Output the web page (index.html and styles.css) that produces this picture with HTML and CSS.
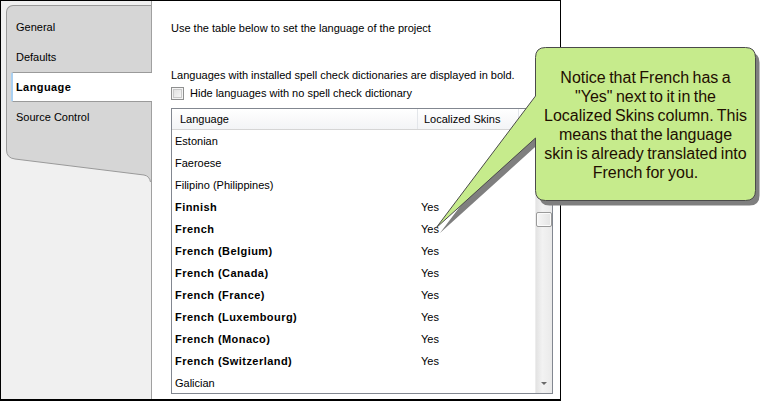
FILE: index.html
```html
<!DOCTYPE html>
<html>
<head>
<meta charset="utf-8">
<link rel="stylesheet" href="styles.css">
</head>
<body>
<div class="window">
  <aside class="sidebar">
    <div class="tabs">
      <div class="tab">General</div>
      <div class="tab">Defaults</div>
      <div class="tab active">Language</div>
      <div class="tab">Source Control</div>
      <svg class="tabs-end" width="145" height="50" viewBox="0 0 145 50">
        <path d="M0,0 H145 V50 H144.5 Q143.5,44 138,43 L9,27 Q0.5,26 0.5,18 Z" fill="#d6d6d6"/>
        <path d="M0.5,0 V18 Q0.5,26 9,27 L138,43 Q143.5,44 144.5,50" fill="none" stroke="#9a9a9a" stroke-width="1"/>
      </svg>
    </div>
  </aside>
  <main class="content">
    <p class="intro">Use the table below to set the language of the project</p>
    <p class="note">Languages with installed spell check dictionaries are displayed in bold.</p>
    <label class="check"><span class="box"></span>Hide languages with no spell check dictionary</label>
    <div class="table">
      <div class="grid">
        <div class="head">
          <div class="hcell c1">Language</div>
          <div class="hcell c2">Localized Skins</div>
          <div class="hcell c3"></div>
        </div>
        <div class="rows">
          <div class="row"><span class="cell">Estonian</span><span class="cell"></span></div>
          <div class="row"><span class="cell">Faeroese</span><span class="cell"></span></div>
          <div class="row"><span class="cell">Filipino (Philippines)</span><span class="cell"></span></div>
          <div class="row bold"><span class="cell">Finnish</span><span class="cell">Yes</span></div>
          <div class="row bold"><span class="cell">French</span><span class="cell">Yes</span></div>
          <div class="row bold"><span class="cell">French (Belgium)</span><span class="cell">Yes</span></div>
          <div class="row bold"><span class="cell">French (Canada)</span><span class="cell">Yes</span></div>
          <div class="row bold"><span class="cell">French (France)</span><span class="cell">Yes</span></div>
          <div class="row bold"><span class="cell">French (Luxembourg)</span><span class="cell">Yes</span></div>
          <div class="row bold"><span class="cell">French (Monaco)</span><span class="cell">Yes</span></div>
          <div class="row bold"><span class="cell">French (Switzerland)</span><span class="cell">Yes</span></div>
          <div class="row"><span class="cell">Galician</span><span class="cell"></span></div>
        </div>
      </div>
      <div class="scrollbar">
        <div class="sb-btn up"></div>
        <div class="sb-track"><div class="thumb"></div></div>
        <div class="sb-btn down"></div>
      </div>
    </div>
  </main>
</div>
<div class="callout">
  <svg class="callout-shape" width="340" height="200" viewBox="0 0 340 200">
    <path transform="translate(4,5)" d="M115.5,7.5 H315.5 Q325.5,7.5 325.5,17.5 V150.5 Q325.5,160.5 315.5,160.5 H115.5 Q105.5,160.5 105.5,150.5 V98 L6,188 L105.5,56 V17.5 Q105.5,7.5 115.5,7.5 Z" fill="#7f7f7f"/>
    <path d="M115.5,7.5 H315.5 Q325.5,7.5 325.5,17.5 V150.5 Q325.5,160.5 315.5,160.5 H115.5 Q105.5,160.5 105.5,150.5 V98 L6,188 L105.5,56 V17.5 Q105.5,7.5 115.5,7.5 Z" fill="#c6eb8c" stroke="#4a4a4a" stroke-width="1"/>
  </svg>
  <div class="callout-text">Notice that French has a<br>"Yes" next to it in the<br>Localized Skins column. This<br>means that the language<br>skin is already translated into<br>French for you.</div>
</div>
</body>
</html>
```

FILE: styles.css
```css
* { box-sizing: border-box; }
html, body { margin: 0; padding: 0; }
body {
  position: relative;
  width: 770px;
  height: 402px;
  background: #fff;
  font-family: "Liberation Sans", Arial, sans-serif;
  font-size: 11px;
  color: #000;
  overflow: hidden;
}
.window {
  display: flex;
  width: 561px;
  height: 401px;
  border: 1px solid #000;
  border-bottom-width: 2px;
  background: #fff;
}
.sidebar {
  width: 151px;
  flex: none;
  background: #f0f0f0;
  border-right: 1px solid #a0a0a0;
  padding: 4px 0 0 5px;
}
.tabs {
  position: relative;
  background: #d6d6d6;
  border-top: 1px solid #9a9a9a;
  border-left: 1px solid #9a9a9a;
  border-top-left-radius: 7px;
  padding-top: 6px;
}
.tab {
  height: 30px;
  display: flex;
  align-items: center;
  padding-left: 9px;
  white-space: nowrap;
}
.tab.active {
  position: relative;
  z-index: 1;
  background: #fff;
  font-weight: bold;
  letter-spacing: 0.4px;
  margin-left: 4px;
  margin-right: -1px;
  padding-left: 3px;
  border-top: 1px solid #9a9a9a;
  border-bottom: 1px solid #9a9a9a;
  border-left: 2px solid #a9d0f2;
  border-radius: 2px 0 0 2px;
}
.tabs-end {
  display: block;
  margin-left: -1px;
  background: #f0f0f0;
}
.content {
  flex: 1;
  background: #fff;
  padding-left: 19px;
}
.intro {
  margin: 20px 0 0;
  line-height: 14px;
}
.note {
  margin: 33px 0 0;
  line-height: 14px;
}
.check {
  display: flex;
  align-items: center;
  gap: 6px;
  height: 13px;
  margin-top: 5px;
  line-height: 13px;
}
.box {
  width: 13px;
  height: 13px;
  border: 1px solid #8e8f8f;
  background: linear-gradient(135deg, #dcdcdc, #fbfbfb);
  box-shadow: inset 0 0 0 1px #f4f4f4, inset 0 0 0 2px #c9c9c9;
}
.table {
  display: flex;
  width: 382px;
  height: 286px;
  margin-top: 8px;
  border: 1px solid #828790;
  background: #fff;
}
.grid {
  flex: 1;
  overflow: hidden;
}
.head {
  display: flex;
  height: 21px;
  border-bottom: 1px solid #d5d5d5;
  background: linear-gradient(#ffffff, #f3f4f6);
}
.hcell {
  display: flex;
  align-items: center;
  height: 20px;
  white-space: nowrap;
}
.hcell.c1 { width: 246px; padding-left: 8px; border-right: 1px solid #e3e6ea; }
.hcell.c2 { width: 101px; padding-left: 6px; border-right: 1px solid #e3e6ea; }
.hcell.c3 { flex: 1; }
.row {
  display: flex;
  height: 22px;
  align-items: center;
  padding-left: 3px;
  white-space: nowrap;
}
.row .cell:first-child { width: 246px; }
.row.bold .cell:first-child { font-weight: bold; letter-spacing: 0.45px; }
.scrollbar {
  width: 17px;
  flex: none;
  display: flex;
  flex-direction: column;
  background: linear-gradient(to right, #e3e3e3, #f2f2f2 40%, #eaeaea);
  border-left: 1px solid #ededed;
}
.sb-btn {
  height: 17px;
  flex: none;
  position: relative;
}
.sb-btn::after {
  content: "";
  position: absolute;
  left: 5px;
  top: 7px;
  border-left: 3px solid transparent;
  border-right: 3px solid transparent;
}
.sb-btn.down::after { border-top: 3px solid #6a6a6a; top: 6px; }
.sb-btn.up::after { border-bottom: 3px solid #6a6a6a; }
.sb-track {
  flex: 1;
  padding-top: 86px;
}
.thumb {
  height: 15px;
  width: 16px;
  border: 1px solid #9a9a9a;
  border-radius: 2px;
  background: linear-gradient(to right, #f6f6f6, #e4e4e4);
  box-shadow: inset 0 0 0 1px #fbfbfb;
}
.callout {
  position: absolute;
  left: 430px;
  top: 40px;
  width: 340px;
  height: 200px;
}
.callout-shape {
  position: absolute;
  left: 0;
  top: 0;
}
.callout-text {
  position: absolute;
  left: 105px;
  top: 7px;
  width: 221px;
  padding-top: 21px;
  text-align: center;
  font-family: "Liberation Sans", Arial, sans-serif;
  font-size: 16px;
  line-height: 19px;
  word-spacing: -1px;
  color: #1f0e00;
}
```
